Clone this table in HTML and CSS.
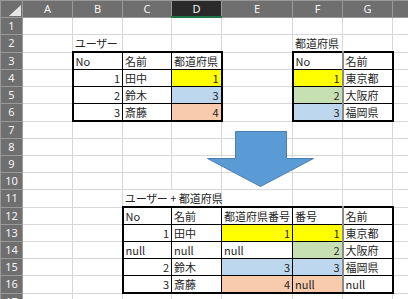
FILE: index.html
```html
<!DOCTYPE html>
<html lang="ja">
<head>
<meta charset="utf-8">
<title>Sheet</title>
<link rel="stylesheet" href="styles.css">
</head>
<body>
<div class="sheet">
<table class="grid">
<colgroup>
<col class="c-hd"><col class="c-a"><col class="c-b"><col class="c-c"><col class="c-d"><col class="c-e"><col class="c-f"><col class="c-g"><col class="c-h">
</colgroup>
<thead>
<tr class="hrow">
<th class="corner"><svg class="tri" width="14" height="12" viewBox="0 0 14 12"><polygon points="13,0 13,11 1,11" fill="#e6e6e6"/></svg></th>
<th>A</th><th>B</th><th>C</th><th class="sel">D</th><th>E</th><th>F</th><th>G</th><th></th>
</tr>
</thead>
<tbody>
<tr><th class="rh">1</th><td></td><td></td><td></td><td></td><td></td><td></td><td></td><td></td></tr>
<tr><th class="rh">2</th><td></td><td class="title">ユーザー</td><td></td><td></td><td></td><td class="title">都道府県</td><td></td><td></td></tr>
<tr><th class="rh">3</th><td></td>
<td class="t tl tt">No</td><td class="t tt">名前</td><td class="t tt tr">都道府県</td><td></td>
<td class="t tl tt gr">No</td><td class="t tt tr">名前</td><td></td></tr>
<tr><th class="rh">4</th><td></td>
<td class="t tl n">1</td><td class="t">田中</td><td class="t tr n y">1</td><td></td>
<td class="t tl n y gr">1</td><td class="t tr">東京都</td><td></td></tr>
<tr><th class="rh">5</th><td></td>
<td class="t tl n">2</td><td class="t">鈴木</td><td class="t tr n b">3</td><td></td>
<td class="t tl n g gr">2</td><td class="t tr">大阪府</td><td></td></tr>
<tr><th class="rh">6</th><td></td>
<td class="t tl tb n">3</td><td class="t tb">斎藤</td><td class="t tr tb n p">4</td><td></td>
<td class="t tl tb n b gr">3</td><td class="t tr tb">福岡県</td><td></td></tr>
<tr><th class="rh">7</th><td></td><td></td><td></td><td></td><td></td><td></td><td></td><td></td></tr>
<tr><th class="rh">8</th><td></td><td></td><td></td><td></td><td></td><td></td><td></td><td></td></tr>
<tr><th class="rh">9</th><td></td><td></td><td></td><td></td><td></td><td></td><td></td><td></td></tr>
<tr><th class="rh">10</th><td></td><td></td><td></td><td></td><td></td><td></td><td></td><td></td></tr>
<tr><th class="rh">11</th><td></td><td></td><td class="title" colspan="2">ユーザー + 都道府県</td><td></td><td></td><td></td><td></td></tr>
<tr><th class="rh">12</th><td></td><td></td>
<td class="t tl tt">No</td><td class="t tt">名前</td><td class="t tt">都道府県番号</td><td class="t tt gr">番号</td><td class="t tt tr">名前</td><td></td></tr>
<tr><th class="rh">13</th><td></td><td></td>
<td class="t tl n">1</td><td class="t">田中</td><td class="t n y">1</td><td class="t n y gr">1</td><td class="t tr">東京都</td><td></td></tr>
<tr><th class="rh">14</th><td></td><td></td>
<td class="t tl">null</td><td class="t">null</td><td class="t">null</td><td class="t n g gr">2</td><td class="t tr">大阪府</td><td></td></tr>
<tr><th class="rh">15</th><td></td><td></td>
<td class="t tl n">2</td><td class="t">鈴木</td><td class="t n b">3</td><td class="t n b gr">3</td><td class="t tr">福岡県</td><td></td></tr>
<tr><th class="rh">16</th><td></td><td></td>
<td class="t tl tb n">3</td><td class="t tb">斎藤</td><td class="t tb n p">4</td><td class="t tb p gr">null</td><td class="t tr tb">null</td><td></td></tr>
<tr><th class="rh">17</th><td></td><td></td><td></td><td></td><td></td><td></td><td></td><td></td></tr>
</tbody>
</table>
<svg class="arrow" width="408" height="299" viewBox="0 0 408 299">
<polygon points="235.5,131.5 286.5,131.5 286.5,158.5 313.5,158.5 260.5,186.5 207.5,158.5 235.5,158.5" fill="#5b9bd5" stroke="#4a7fb3" stroke-width="1"/>
</svg>
</div>
</body>
</html>
```
FILE: styles.css
```css
html, body {
  margin: 0;
  padding: 0;
  background: #ffffff;
  overflow: hidden;
}
.sheet {
  position: relative;
  width: 408px;
  height: 299px;
  overflow: hidden;
}
.grid {
  border-collapse: collapse;
  table-layout: fixed;
  width: 416px;
  font-family: "Noto Sans CJK JP", "Noto Sans", sans-serif;
  font-size: 11px;
  font-feature-settings: "palt";
  color: #262626;
}
.c-hd { width: 22px; }
.c-a { width: 50px; }
.c-b { width: 50px; }
.c-c { width: 49px; }
.c-d { width: 50px; }
.c-e { width: 71px; }
.c-f { width: 50px; }
.c-g { width: 50px; }
.c-h { width: 24px; }
.hrow th {
  height: 15px;
  padding: 0;
  background: #6f6f6f;
  color: #f4f4f4;
  font-family: "Noto Sans", "Liberation Sans", sans-serif;
  font-weight: normal;
  font-size: 11px;
  line-height: 13px;
  border: 1px solid #999999;
  text-align: center;
}
.hrow th.sel {
  background: #2a2a2a;
  border-bottom: 2px solid #217346;
}
.hrow th.corner {
  position: relative;
  text-align: right;
  vertical-align: bottom;
}
.tri {
  display: block;
  margin-left: auto;
}
th.rh {
  height: 16px;
  padding: 0;
  background: #6f6f6f;
  color: #f4f4f4;
  font-family: "Noto Sans", "Liberation Sans", sans-serif;
  font-weight: normal;
  font-size: 11px;
  line-height: 14px;
  border: 1px solid #9a9a9a;
  text-align: center;
}
td {
  height: 16px;
  padding: 0 2px;
  border: 1px solid #d8d8d8;
  white-space: nowrap;
  overflow: visible;
  line-height: 14px;
  vertical-align: middle;
}
td.title {
  text-align: left;
}
td.t { border: 1px solid #000000; }
td.tl { border-left: 2px solid #000000; }
td.tr { border-right: 2px solid #000000; }
td.tt { border-top: 2px solid #000000; }
td.tb { border-bottom: 2px solid #000000; }
td.gr { border-right: 2px solid #8a8a8a; }
td.n { text-align: right; }
td.y { background: #ffff00; }
td.b { background: #bdd7ee; }
td.g { background: #c6e0b4; }
td.p { background: #f8cbad; }
.arrow {
  position: absolute;
  left: 0;
  top: 0;
  pointer-events: none;
}
```
